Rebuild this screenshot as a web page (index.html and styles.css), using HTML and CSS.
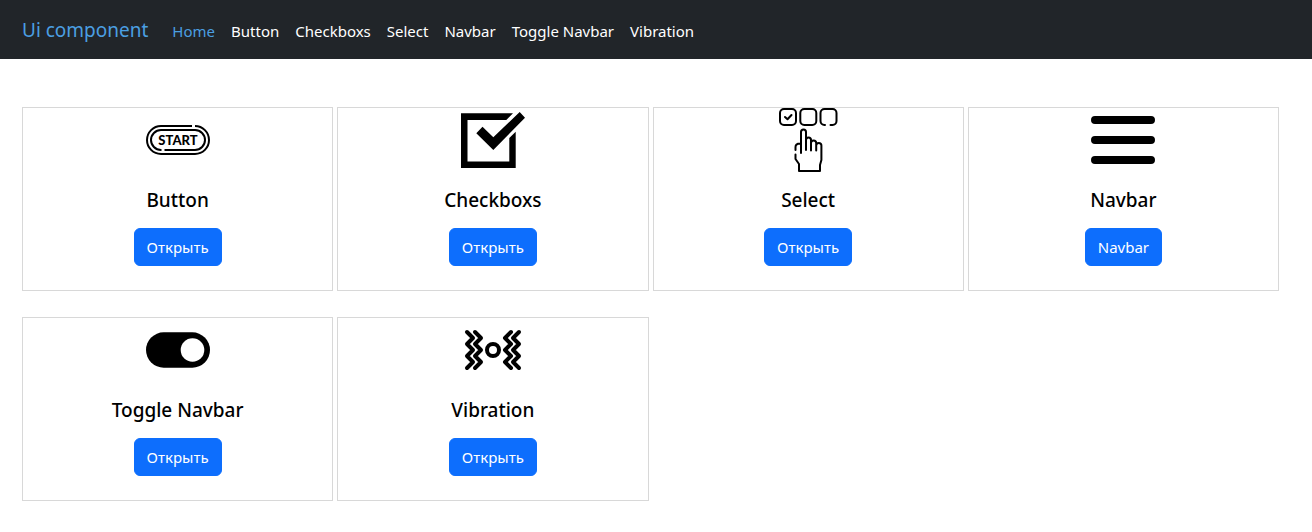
FILE: index.html
```html
<!DOCTYPE html>
<html lang="ru">
<head>
<meta charset="utf-8">
<meta name="viewport" content="width=device-width, initial-scale=1">
<title>Ui component</title>
<link rel="stylesheet" href="styles.css">
</head>
<body>
<nav class="navbar">
  <a class="brand" href="#">Ui component</a>
  <ul class="menu">
    <li><a class="link active" href="#">Home</a></li>
    <li><a class="link" href="#">Button</a></li>
    <li><a class="link" href="#">Checkboxs</a></li>
    <li><a class="link" href="#">Select</a></li>
    <li><a class="link" href="#">Navbar</a></li>
    <li><a class="link" href="#">Toggle Navbar</a></li>
    <li><a class="link" href="#">Vibration</a></li>
  </ul>
</nav>
<main class="cards">
  <article class="card">
    <svg class="icon" viewBox="0 0 64 64" fill="none" stroke="#000" stroke-width="2" stroke-linecap="butt">
      <path d="M46 18H15a14 14 0 0 0 0 28h34a14 14 0 0 0 0-28"/>
      <path d="M15.500 42H15a10 10 0 0 1 0-20h34a10 10 0 0 1 0 20H18.500"/>
      <text class="start" x="32" y="37" text-anchor="middle">START</text>
    </svg>
    <h5 class="title">Button</h5>
    <button class="btn" type="button">Открыть</button>
  </article>
  <article class="card">
    <svg class="icon" viewBox="0 0 64 64">
      <path d="M0 5.300H52L45.300 12H6.500V53.500H48.300V30L54.700 23.700V60H0Z"/>
      <path d="M58.700 4L64 9.700L32.300 42L15.300 25.300L21.500 18.700L32.300 29.300Z"/>
    </svg>
    <h5 class="title">Checkboxs</h5>
    <button class="btn" type="button">Открыть</button>
  </article>
  <article class="card">
    <svg class="icon" viewBox="0 0 64 64" fill="none" stroke="#000" stroke-width="2" stroke-linecap="round" stroke-linejoin="round">
      <rect x="4" y="1" width="16" height="16" rx="4"/>
      <rect x="24.300" y="1" width="16" height="16" rx="4"/>
      <path d="M49 17H48.500a4 4 0 0 1-4-4V5a4 4 0 0 1 4-4h8a4 4 0 0 1 4 4v8a4 4 0 0 1-4 4h-2"/>
      <path d="M9 9l2.500 2.300L15.500 7"/>
      <path d="M25 45V24a2.500 2.500 0 0 1 5 0V42M30 32a2.500 2.500 0 0 1 5 0V42.500M35 35a2.600 2.600 0 0 1 5.200 0V42.500M40.200 37.500a2.600 2.600 0 0 1 5.200 0V52L44 57V63H23V56L19.500 51V46.500M19.500 42V39q0-3.500 4.500-3.500"/>
    </svg>
    <h5 class="title">Select</h5>
    <button class="btn" type="button">Открыть</button>
  </article>
  <article class="card">
    <svg class="icon" viewBox="0 0 64 64" stroke="#000" stroke-width="8" stroke-linecap="round">
      <path d="M4 12H60M4 32H60M4 52H60"/>
    </svg>
    <h5 class="title">Navbar</h5>
    <button class="btn" type="button">Navbar</button>
  </article>
  <article class="card">
    <svg class="icon" viewBox="0 0 64 64">
      <rect y="14.300" width="64" height="35.400" rx="17.700"/>
      <circle cx="46.500" cy="32" r="11.800" fill="#fff"/>
    </svg>
    <h5 class="title">Toggle Navbar</h5>
    <button class="btn" type="button">Открыть</button>
  </article>
  <article class="card">
    <svg class="icon" viewBox="0 0 64 64" fill="none" stroke="#000" stroke-width="4" stroke-linecap="round" stroke-linejoin="round">
      <circle cx="32" cy="32" r="6"/>
      <path d="M6 14L12 20L6 26L12 32L6 38L12 44L6 50"/>
      <path d="M14 14L20 20L14 26L20 32L14 38L20 44L14 50"/>
      <path d="M50 14L44 20L50 26L44 32L50 38L44 44L50 50"/>
      <path d="M58 14L52 20L58 26L52 32L58 38L52 44L58 50"/>
    </svg>
    <h5 class="title">Vibration</h5>
    <button class="btn" type="button">Открыть</button>
  </article>
</main>
</body>
</html>
```
FILE: styles.css
```css
* { box-sizing: border-box; }

body {
  margin: 0;
  background: #fff;
  color: #000;
  font-family: "Noto Sans", "Open Sans", sans-serif;
  font-size: 15px;
  line-height: 24px;
}

.navbar {
  display: flex;
  align-items: center;
  gap: 16px;
  min-height: 59px;
  padding: 8px 22px;
  background: #212529;
}

.brand {
  color: #4b9fe1;
  font-size: 19px;
  line-height: 30px;
  text-decoration: none;
}

.menu {
  display: flex;
  margin: 0;
  padding: 2px 0 0;
  list-style: none;
}

.link {
  display: block;
  padding: 8px;
  color: #fff;
  text-decoration: none;
}

.link.active { color: #4b9fe1; }

.cards {
  display: grid;
  grid-template-columns: repeat(4, 1fr);
  gap: 26px 4px;
  padding: 48px 33px 31px 22px;
}

.card {
  display: flex;
  flex-direction: column;
  align-items: center;
  padding-bottom: 24px;
  border: 1px solid #d8d8d8;
}

.icon {
  width: 64px;
  height: 64px;
}

.start {
  fill: #000;
  stroke: none;
  font-family: Lato, sans-serif;
  font-size: 13px;
  font-weight: 900;
}

.title {
  margin: 16px 0;
  font-size: 19px;
  font-weight: 500;
  line-height: 24px;
}

.btn {
  padding: 6px 12px;
  border: 1px solid #0d6efd;
  border-radius: 6px;
  background: #0d6efd;
  color: #fff;
  font: inherit;
  cursor: pointer;
}
```
